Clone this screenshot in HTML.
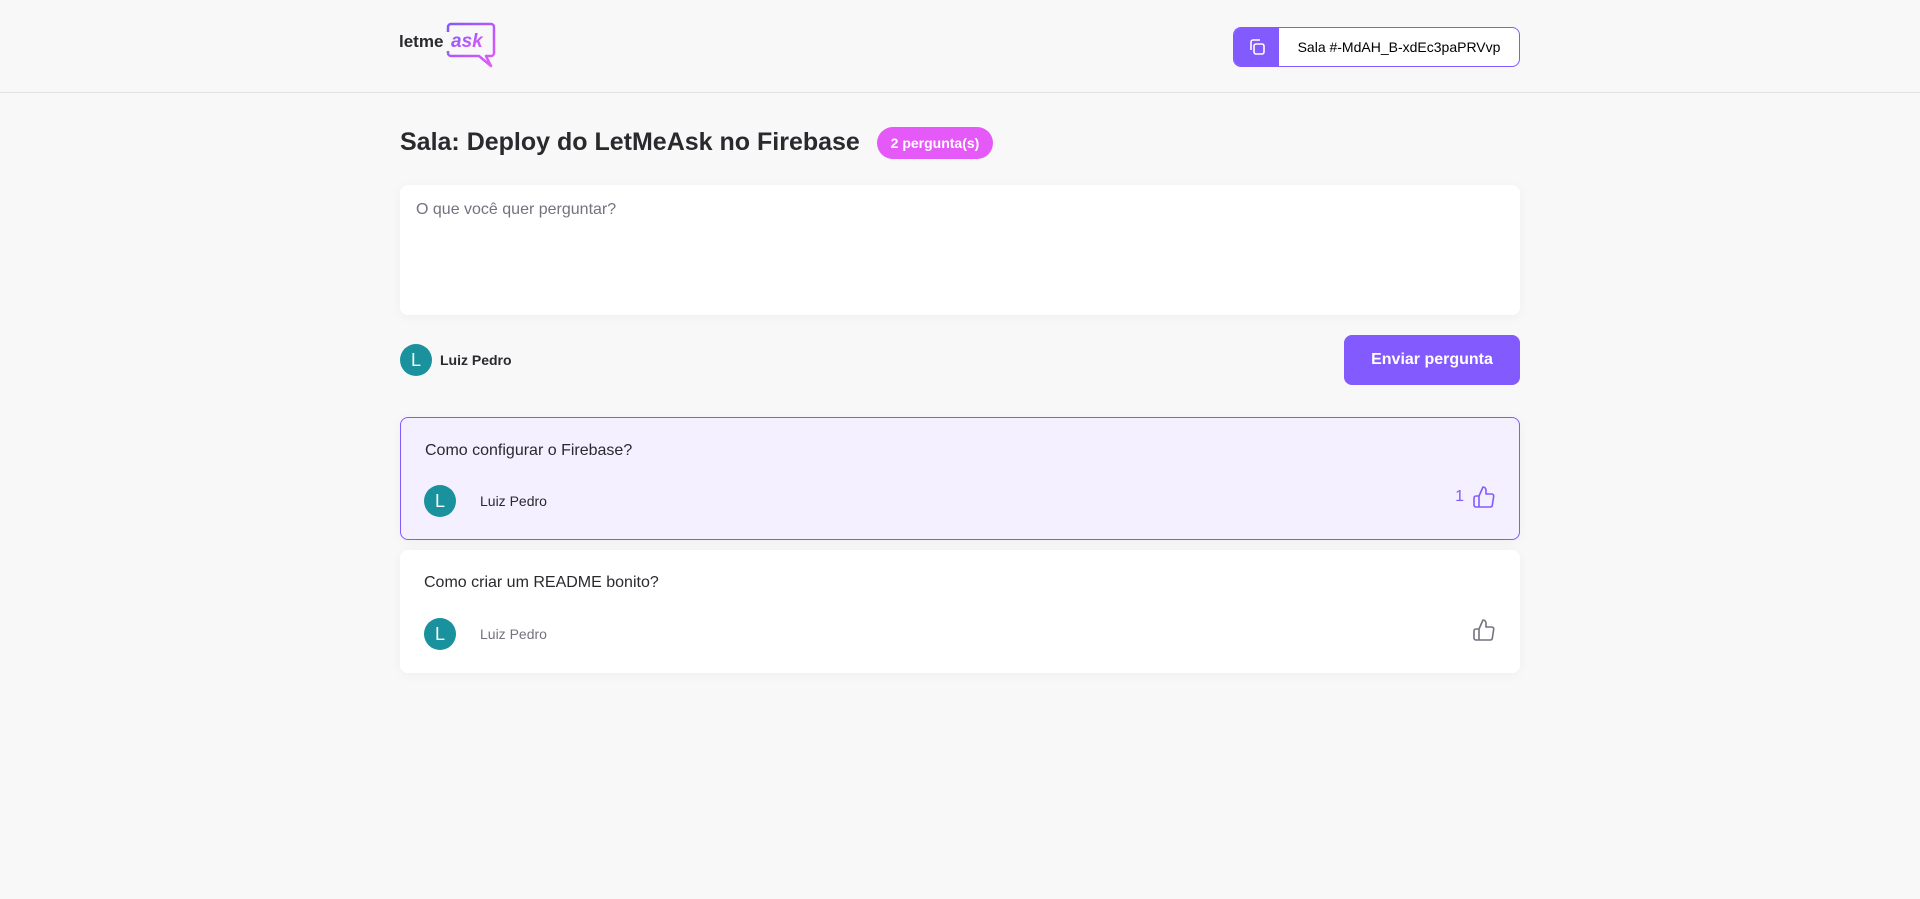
<!DOCTYPE html>
<html><head><meta charset="utf-8"><style>
*{box-sizing:border-box;margin:0;padding:0}
body{width:1920px;height:899px;background:#f8f8f8;font-family:"Liberation Sans",sans-serif;color:#29292e;overflow:hidden;position:relative}
header{height:93px;border-bottom:1px solid #e2e2e2}
.wrap{width:1120px;margin:0 auto;position:relative}
.main{position:absolute;left:400px;top:0;width:1120px;height:899px}
.logo{position:absolute;left:-1px;top:22px}
.code{position:absolute;right:0;top:27px;height:40px;width:287px;border:1px solid #835afd;border-radius:8px;background:#fff;overflow:hidden;display:flex}
.code .ic{width:45px;background:#835afd;display:flex;align-items:center;justify-content:center}
.code span{flex:1;display:flex;align-items:center;justify-content:center;font-size:14px;color:#000}
h1{position:absolute;left:0;top:128px;font-size:25px;font-weight:bold;color:#29292e}
.badge{position:absolute;left:477px;top:127px;height:32px;width:116px;border-radius:16px;background:#e559f9;color:#fff;font-size:14px;font-weight:bold;display:flex;align-items:center;justify-content:center}
.ta{position:absolute;left:0;top:185px;width:1120px;height:130px;background:#fff;border-radius:8px;box-shadow:0 2px 12px rgba(0,0,0,.04);padding:16px;font-size:16px;color:#737380}
.user{position:absolute;left:0;display:flex;align-items:center}
.av{width:32px;height:32px;border-radius:50%;background:#1a929d;color:#fff;font-size:18px;display:flex;align-items:center;justify-content:center}
.btn{position:absolute;right:0;top:335px;width:176px;height:50px;border-radius:8px;background:#835afd;color:#fff;font-weight:bold;font-size:16px;display:flex;align-items:center;justify-content:center}
.q{position:absolute;left:0;width:1120px;height:123px;border-radius:8px;background:#fff;box-shadow:0 2px 12px rgba(0,0,0,.04);padding:24px}
.q p{font-size:16px;color:#29292e;margin-top:0}
.q .user{left:24px;top:68px}
.q .user b{font-weight:normal;font-size:14px;color:#737380;margin-left:24px}
.like{position:absolute;right:24px;top:68px;display:flex;align-items:center;gap:8px;font-size:16px}
</style></head><body>
<header><div class="wrap">
<svg class="logo" width="98" height="47" viewBox="0 0 98 47">
<defs><linearGradient id="g" x1="0" y1="0" x2="1" y2="1"><stop offset="0" stop-color="#835afd"/><stop offset="1" stop-color="#e559f9"/></linearGradient></defs>
<text x="0" y="25" font-family="Liberation Sans" font-weight="bold" font-size="17" fill="#29292e">letme</text>
<path d="M49 10V5a3 3 0 0 1 3-3h40a3 3 0 0 1 3 3v26a3 3 0 0 1-3 3h-5l5 10-12-10H52a3 3 0 0 1-3-3v-2" fill="none" stroke="url(#g)" stroke-width="2.5" stroke-linejoin="round"/>
<text x="52" y="25" font-family="Liberation Sans" font-weight="bold" font-style="italic" font-size="19" fill="url(#g)">ask</text>
</svg>
<div class="code"><div class="ic"><svg width="20" height="20" viewBox="0 0 20 20" fill="none" stroke="#fff" stroke-width="1.6"><rect x="7" y="7" width="10" height="10" rx="2"/><path d="M4 13V5a2 2 0 0 1 2-2h7"/></svg></div><span>Sala #-MdAH_B-xdEc3paPRVvp</span></div>
</div></header>
<div class="main">
<h1>Sala: Deploy do LetMeAsk no Firebase</h1>
<div class="badge">2 pergunta(s)</div>
<div class="ta">O que você quer perguntar?</div>
<div class="user" style="top:344px"><div class="av">L</div><b style="font-size:14px;margin-left:8px;color:#29292e">Luiz Pedro</b></div>
<div class="btn">Enviar pergunta</div>
<div class="q" style="top:417px;background:#f4f0ff;border:1px solid #835afd"><p>Como configurar o Firebase?</p>
<div class="user" style="left:23px;top:67px"><div class="av">L</div><b style="color:#29292e">Luiz Pedro</b></div>
<div class="like" style="color:#835afd;right:23px;top:67px">1 <svg width="24" height="24" viewBox="0 0 24 24" fill="none" stroke="#835afd" stroke-width="1.6" stroke-linejoin="round"><path d="M7 22H4a2 2 0 0 1-2-2v-7a2 2 0 0 1 2-2h3M7 11l4-9a3 3 0 0 1 3 3v4h5.7a2 2 0 0 1 2 2.3l-1.4 9a2 2 0 0 1-2 1.7H7z"/></svg></div></div>
<div class="q" style="top:550px"><p>Como criar um README bonito?</p>
<div class="user"><div class="av">L</div><b>Luiz Pedro</b></div>
<div class="like"><svg width="24" height="24" viewBox="0 0 24 24" fill="none" stroke="#737380" stroke-width="1.6" stroke-linejoin="round"><path d="M7 22H4a2 2 0 0 1-2-2v-7a2 2 0 0 1 2-2h3M7 11l4-9a3 3 0 0 1 3 3v4h5.7a2 2 0 0 1 2 2.3l-1.4 9a2 2 0 0 1-2 1.7H7z"/></svg></div></div>
</div>
</body></html>
